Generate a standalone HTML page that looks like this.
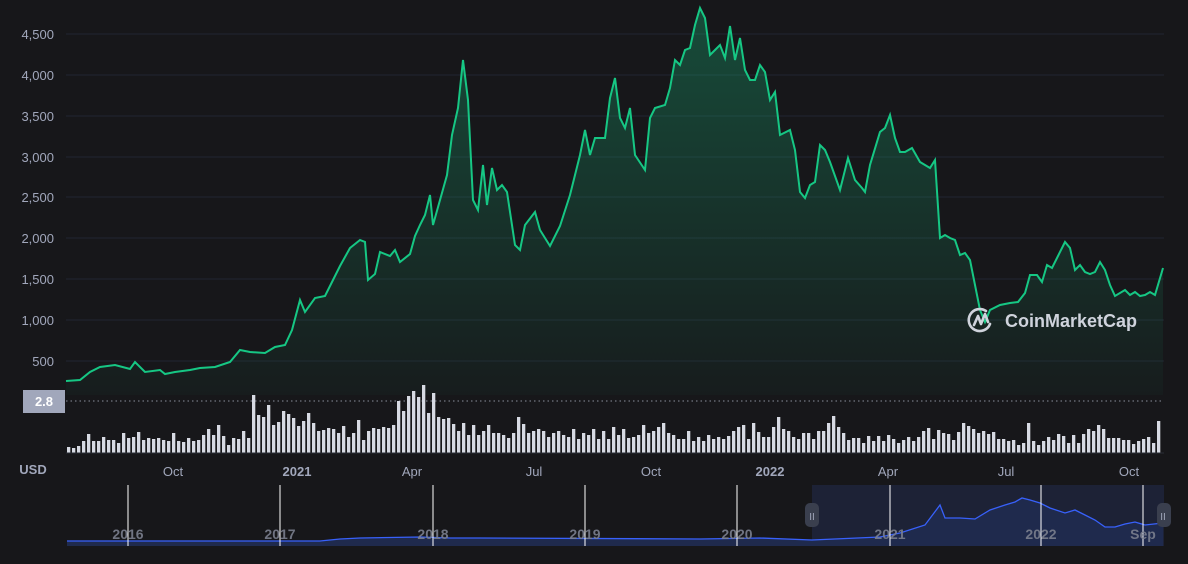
<!DOCTYPE html>
<html><head><meta charset="utf-8"><style>
body{margin:0;background:#17171a;width:1188px;height:559px;overflow:hidden;font-family:"Liberation Sans",sans-serif;}
</style></head><body>
<svg width="1188" height="559" viewBox="0 0 1188 559" xmlns="http://www.w3.org/2000/svg" font-family="Liberation Sans, sans-serif">
<defs>
<linearGradient id="g" x1="0" y1="0" x2="0" y2="1"><stop offset="0" stop-color="#16c784" stop-opacity="0.3"/><stop offset="1" stop-color="#16c784" stop-opacity="0.03"/></linearGradient>
</defs>
<rect width="1188" height="559" fill="#17171a"/>
<g stroke="#222531" stroke-width="1">
<line x1="66" x2="1164" y1="34" y2="34"/><line x1="66" x2="1164" y1="75" y2="75"/><line x1="66" x2="1164" y1="116" y2="116"/><line x1="66" x2="1164" y1="157" y2="157"/><line x1="66" x2="1164" y1="197" y2="197"/><line x1="66" x2="1164" y1="238" y2="238"/><line x1="66" x2="1164" y1="279" y2="279"/><line x1="66" x2="1164" y1="320" y2="320"/><line x1="66" x2="1164" y1="361" y2="361"/>
</g>
<g fill="#a1a7bb" font-size="13" text-anchor="end">
<text x="54" y="39">4,500</text><text x="54" y="80">4,000</text><text x="54" y="121">3,500</text><text x="54" y="162">3,000</text><text x="54" y="202">2,500</text><text x="54" y="243">2,000</text><text x="54" y="284">1,500</text><text x="54" y="325">1,000</text><text x="54" y="366">500</text>
</g>
<path id="pr" d="M66,381 L80,380 90,372 100,367 115,365 130,369 135,362 145,372 160,370 165,374 175,372 190,370 200,368 215,367 230,362 240,350 250,352 265,353 275,347 285,345 292,330 300,300 305,312 315,298 325,296 330,286 340,266 350,248 360,240 365,242 368,280 375,274 380,252 390,256 395,250 400,262 410,254 415,236 420,225 425,215 430,195 433,225 440,200 447,175 452,135 458,108 463,60 468,100 473,200 478,210 483,165 487,205 492,168 497,190 502,185 507,192 515,245 520,250 525,225 535,212 540,230 550,246 560,226 570,195 580,155 585,130 590,155 595,138 605,138 610,98 615,78 620,118 625,128 630,108 635,155 645,170 650,118 655,108 665,105 670,88 675,60 680,65 685,50 690,48 695,25 700,8 705,18 710,55 715,50 720,45 725,58 730,26 735,60 740,38 745,70 750,80 755,80 760,65 765,72 770,100 775,92 780,135 790,130 795,150 800,192 805,198 810,185 815,182 820,145 825,150 830,162 840,190 848,158 855,180 862,188 865,192 870,165 880,132 885,128 890,115 895,138 900,152 905,152 912,148 920,162 925,165 930,168 935,160 940,238 945,235 950,238 955,240 960,255 965,253 970,260 980,310 985,322 990,310 1000,305 1010,303 1018,302 1025,293 1030,275 1037,275 1042,282 1047,265 1052,268 1058,256 1065,242 1070,248 1075,270 1080,265 1085,272 1090,274 1095,272 1100,262 1105,270 1110,285 1115,296 1125,290 1130,295 1135,292 1140,296 1145,295 1150,292 1155,295 1163,268" fill="none" stroke="#16c784" stroke-width="2"/>
<path id="fill" fill="url(#g)"/>
<g id="logo" fill="none" stroke="#cfd3dc" stroke-width="2.6" stroke-linecap="round" stroke-linejoin="round">
<path d="M986,311 A11,11 0 1 0 990,324"/>
<path d="M974,325 L978,316 L981,324 L985,314 L988,322"/>
</g>
<text x="1005" y="327" fill="#cfd3dc" font-size="18" font-weight="bold">CoinMarketCap</text>
<line x1="66" x2="1164" y1="401" y2="401" stroke="#8a8f9c" stroke-dasharray="1.5,3"/>
<rect x="23" y="390" width="42" height="23" fill="#a1a7bb"/>
<text x="44" y="406" fill="#fff" font-size="13" font-weight="bold" text-anchor="middle">2.8</text>
<g id="vol" fill="#d7dae3"></g>
<line x1="66" x2="1164" y1="453" y2="453" stroke="#2a2d36"/>
<g fill="#a1a7bb" font-size="13" text-anchor="middle">
<text x="33" y="474" font-weight="bold" text-anchor="middle">USD</text>
<text x="173" y="476">Oct</text><text x="297" y="476" font-weight="bold">2021</text><text x="412" y="476">Apr</text><text x="534" y="476">Jul</text><text x="651" y="476">Oct</text><text x="770" y="476" font-weight="bold">2022</text><text x="888" y="476">Apr</text><text x="1006" y="476">Jul</text><text x="1129" y="476">Oct</text>
</g>
<rect x="67" y="485" width="1097" height="60" fill="#17171a"/>
<rect x="812" y="485" width="352" height="61" fill="#1d2236"/>
<path d="M67,541 L320,541 340,539 360,538 420,537 450,538 480,538 700,539 760,538 812,540 880,537 900,533 925,525 940,505 945,518 960,518 975,519 990,510 1005,505 1015,502 1022,498 1030,500 1040,503 1050,508 1065,513 1075,510 1085,515 1095,520 1105,527 1115,527 1125,524 1135,522 1145,525 1163,523 L1163,546 L67,546 Z" fill="#1f2a4d"/>
<path d="M67,541 L320,541 340,539 360,538 420,537 450,538 480,538 700,539 760,538 812,540 880,537 900,533 925,525 940,505 945,518 960,518 975,519 990,510 1005,505 1015,502 1022,498 1030,500 1040,503 1050,508 1065,513 1075,510 1085,515 1095,520 1105,527 1115,527 1125,524 1135,522 1145,525 1163,523" fill="none" stroke="#3861fb" stroke-width="1.3"/>
<g stroke="#fff" stroke-width="1"><line x1="128" x2="128" y1="485" y2="546"/><line x1="280" x2="280" y1="485" y2="546"/><line x1="433" x2="433" y1="485" y2="546"/><line x1="585" x2="585" y1="485" y2="546"/><line x1="737" x2="737" y1="485" y2="546"/><line x1="890" x2="890" y1="485" y2="546"/><line x1="1041" x2="1041" y1="485" y2="546"/><line x1="1143" x2="1143" y1="485" y2="546"/></g>
<g fill="#7a7f8e" font-size="14" font-weight="bold" text-anchor="middle" opacity="0.9">
<text x="128" y="539">2016</text><text x="280" y="539">2017</text><text x="433" y="539">2018</text><text x="585" y="539">2019</text><text x="737" y="539">2020</text><text x="890" y="539">2021</text><text x="1041" y="539">2022</text><text x="1143" y="539">Sep</text>
</g>
<rect x="805" y="503" width="14" height="24" rx="5" fill="#3a3f4e"/><text x="812" y="520" fill="#a1a7bb" font-size="10" text-anchor="middle">II</text>
<rect x="1157" y="503" width="14" height="24" rx="5" fill="#3a3f4e"/><text x="1163" y="520" fill="#a1a7bb" font-size="10" text-anchor="middle">II</text>
</svg>
<script>
var p=document.getElementById('pr').getAttribute('d');
document.getElementById('fill').setAttribute('d',p+' L1163,395 L66,395 Z');
var hs=[6,5,7,12,12,19,12,12,16,14,13,13,10,20,31,15,16,21,13,15,15,14,15,12,13,12,20,12,16,11,15,12,13,12,18,24,18,28,13,17,8,15,13,14,22,15,58,44,38,36,48,28,40,31,42,39,35,30,27,32,40,30,22,22,23,25,25,24,20,27,16,28,20,33,13,22,16,25,24,26,25,40,28,52,42,38,57,62,56,68,48,40,60,36,34,30,35,29,22,30,24,18,28,18,22,12,28,20,20,30,18,15,20,36,22,29,20,22,24,14,22,16,20,22,24,18,16,24,16,14,20,18,24,18,14,22,14,26,22,18,24,15,16,22,18,28,20,22,18,26,30,20,14,18,14,14,22,20,12,16,12,18,14,14,16,14,17,24,22,26,28,24,14,30,21,16,20,16,26,36,24,22,22,16,14,20,12,20,14,22,22,24,30,37,26,21,20,13,15,15,13,10,17,12,17,16,12,18,14,10,14,13,16,12,9,16,22,25,14,22,23,20,19,13,28,21,30,27,24,14,20,22,19,21,19,14,14,12,19,13,8,10,30,24,12,8,12,16,12,13,19,17,10,15,18,10,19,23,24,22,28,24,18,15,15,15,13,13,13,9,12,14,11,16,10,32,22];
var g=document.getElementById('vol'),s='',n=Math.floor((1163-67)/5);
for(var i=0;i<n;i++){var h=hs[Math.floor(i*hs.length/n)];var x=67+i*5;s+='<rect x="'+x+'" y="'+(453-h)+'" width="3.3" height="'+h+'"/>';}
g.innerHTML=s;
</script>
</body></html>
